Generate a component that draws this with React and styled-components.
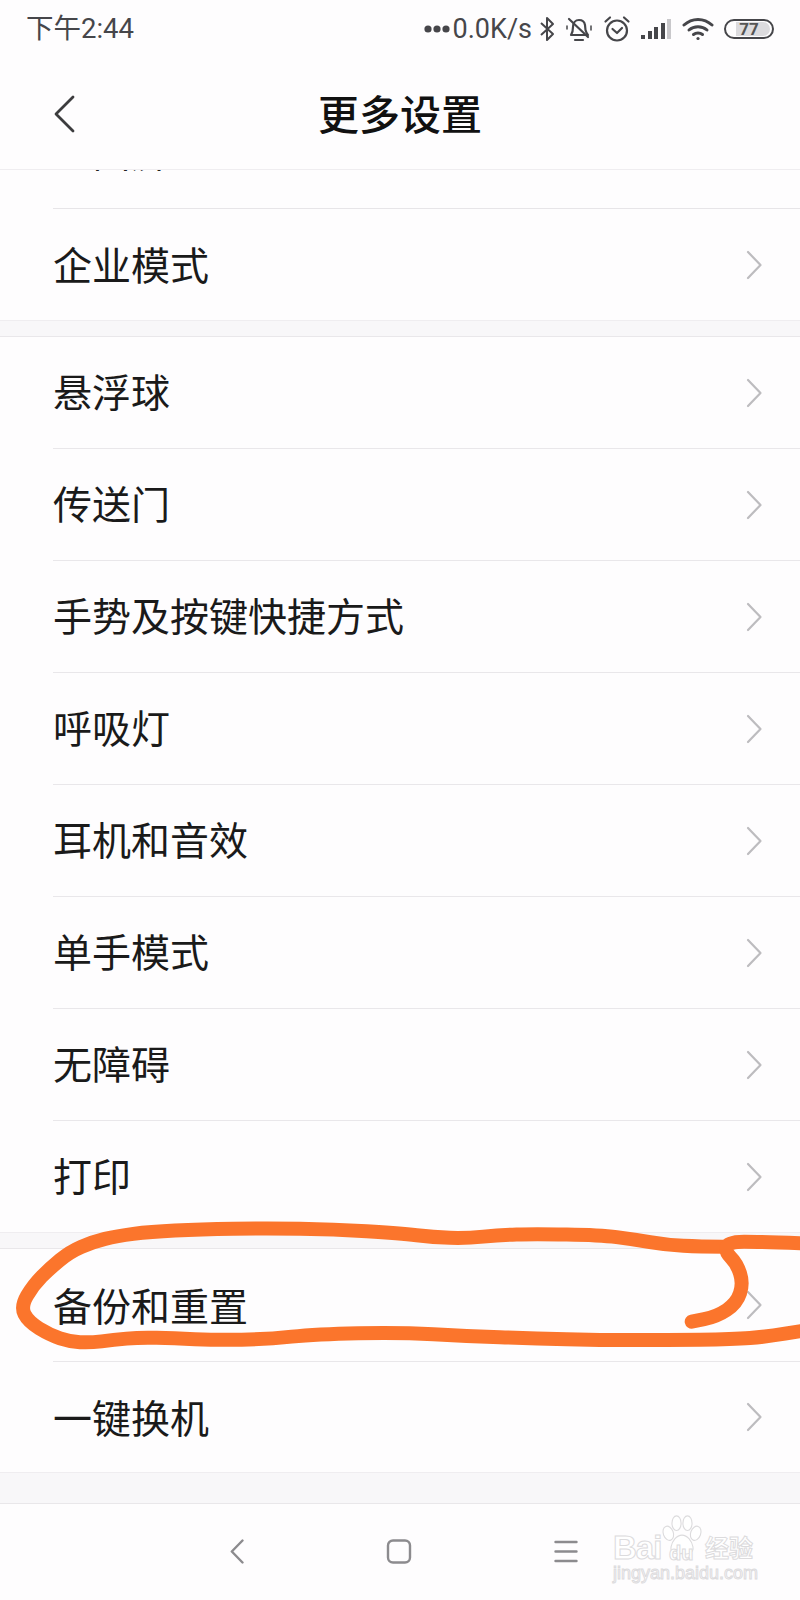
import React from 'react';
import styled, { createGlobalStyle } from 'styled-components';

const Global = createGlobalStyle`
  html, body { margin: 0; padding: 0; background: #fefdfe; }
  body { width: 800px; height: 1600px; overflow: hidden; font-family: "Noto Sans CJK SC", "Noto Sans", sans-serif; }
  #root { width: 800px; height: 1600px; }
`;

const Page = styled.div`
  position: relative;
  width: 800px;
  height: 1600px;
  display: flex;
  flex-direction: column;
  background: #fefdfe;
  overflow: hidden;
`;

const StatusBar = styled.div`
  height: 60px;
  display: flex;
  align-items: center;
  justify-content: space-between;
  padding: 0 26px 2px 26px;
  box-sizing: border-box;
  color: #46464a;
`;

const Time = styled.span`
  font-size: 27.5px;
  line-height: 30px;
  font-family: "Roboto", "Noto Sans CJK SC", sans-serif;
`;

const StatusIcons = styled.div`
  display: flex;
  align-items: center;
  height: 36px;
  gap: 10px;
`;

const SpeedGroup = styled.div`
  display: flex;
  align-items: center;
  gap: 3px;
  margin-right: -3px;
`;

const Speed = styled.span`
  font-family: "Roboto", sans-serif;
  font-size: 27px;
  line-height: 30px;
`;

const TitleBar = styled.div`
  height: 109px;
  flex: none;
  position: relative;
  display: flex;
  align-items: center;
  justify-content: center;
`;

const Title = styled.h1`
  margin: 0 0 6px;
  font-size: 41px;
  line-height: 56px;
  font-weight: 500;
  color: #111;
`;

const BackButton = styled.svg`
  position: absolute;
  left: 52px;
  top: 35px;
`;

const List = styled.div`
  flex: none;
  display: flex;
  flex-direction: column;
  border-top: 1px solid #efedf0;
`;

const ClippedRow = styled.div`
  height: 39px;
  box-sizing: border-box;
  margin-left: 53px;
  overflow: hidden;
  border-bottom: 1px solid #e7e5e8;
  flex: none;
`;

const ClippedLabel = styled.div`
  font-size: 39px;
  line-height: 56px;
  color: #222;
  margin-top: -48px;
`;

const Row = styled.div`
  height: ${p => p.$h || 112}px;
  flex: none;
  box-sizing: border-box;
  margin-left: 53px;
  padding-right: 37px;
  display: flex;
  align-items: center;
  justify-content: space-between;
  border-bottom: ${p => (p.$last ? 'none' : '1px solid #e9e7ea')};
`;

const Label = styled.span`
  font-size: 39px;
  line-height: 56px;
  color: #1a1a1a;
  padding-bottom: ${p => p.$lift ?? 5}px;
`;

const Gap = styled.div`
  height: ${p => p.$h}px;
  flex: none;
  box-sizing: border-box;
  background: #f8f7f9;
  border-top: 1px solid #efedf0;
  border-bottom: 1px solid #e9e7ea;
`;

const NavBar = styled.div`
  flex: 1;
  display: flex;
  align-items: center;
  justify-content: center;
  gap: 142px;
  padding: 0 0 2px 8px;
  box-sizing: border-box;
`;

const Scribble = styled.svg`
  position: absolute;
  left: 0;
  top: 1200px;
  pointer-events: none;
`;

const Watermark = styled.div`
  position: absolute;
  left: 613px;
  top: 1515px;
  width: 150px;
  height: 72px;
  color: #fff;
  -webkit-text-stroke: 1px #dcdbdd;
  font-family: "Liberation Sans", "Noto Sans CJK SC", sans-serif;
`;

const MarkBrand = styled.span`
  position: absolute;
  left: 0;
  top: 14px;
  font-size: 33px;
  line-height: 38px;
  font-weight: 700;
  letter-spacing: -1px;
`;

const MarkDu = styled.span`
  position: absolute;
  left: 56px;
  top: 28px;
  font-size: 20px;
  line-height: 20px;
  font-weight: 700;
`;

const MarkCn = styled.span`
  position: absolute;
  left: 92px;
  top: 16px;
  font-size: 24px;
  line-height: 32px;
  font-weight: 700;
  font-family: "Noto Sans CJK SC", sans-serif;
`;

const MarkUrl = styled.span`
  position: absolute;
  left: 0;
  top: 47px;
  font-size: 18px;
  line-height: 22px;
  white-space: nowrap;
`;

const MarkPaw = styled.svg`
  position: absolute;
  left: 47px;
  top: 0;
`;

const Chevron = () => (
  <svg width="18" height="30" viewBox="0 0 18 30" fill="none">
    <path d="M3 2 L15.500 15 L3 28" stroke="#bdbcbf" strokeWidth="2.200" strokeLinecap="round" strokeLinejoin="round" />
  </svg>
);

const Dots = () => (
  <svg width="26" height="10" viewBox="0 0 26 10" fill="#46464a">
    <circle cx="4" cy="5" r="3.600" /><circle cx="13" cy="5" r="3.600" /><circle cx="22" cy="5" r="3.600" />
  </svg>
);

const Bluetooth = () => (
  <svg width="16" height="26" viewBox="0 0 16 26" fill="none" stroke="#46464a" strokeWidth="2">
    <path d="M2 7 L14 18 L8 24 L8 2 L14 8 L2 19" strokeLinejoin="round" />
  </svg>
);

const BellMuted = () => (
  <svg width="28" height="26" viewBox="0 0 28 26" fill="none" stroke="#46464a" strokeWidth="2.200" strokeLinecap="round">
    <path d="M6 19 C8 16 8 14 8 11 C8 7 10.500 4 14 4 C17 4 19.500 6 20 9 L20.500 14 C21 16 22 18 23 19 Z" strokeLinejoin="round" />
    <path d="M10 24 H18" />
    <path d="M4 3 L23 21" />
    <path d="M2 10 V13 M26 10 V14" strokeWidth="1.500" />
  </svg>
);

const Alarm = () => (
  <svg width="28" height="28" viewBox="0 0 28 28" fill="none" stroke="#46464a" strokeWidth="2.200" strokeLinecap="round" strokeLinejoin="round">
    <circle cx="14" cy="15.500" r="10" />
    <path d="M9.500 14 L14 18 L19 13" />
    <path d="M2.500 6.500 L7 2.500 M21 2.500 L25.500 6.500" />
  </svg>
);

const Signal = () => (
  <svg width="31" height="24" viewBox="0 0 31 24">
    <rect x="0" y="18" width="4" height="4" fill="#46464a" />
    <rect x="7" y="14" width="4" height="8" fill="#46464a" />
    <rect x="13" y="10" width="4" height="12" fill="#46464a" />
    <rect x="20" y="6" width="4" height="16" fill="#46464a" />
    <rect x="26" y="2" width="4" height="20" fill="#c9c8cb" />
  </svg>
);

const Wifi = () => (
  <svg width="32" height="24" viewBox="0 0 32 24" fill="none" stroke="#46464a" strokeWidth="3" strokeLinecap="round">
    <path d="M2 8 C10 0.500 22 0.500 30 8" />
    <path d="M7 13 C12 8.500 20 8.500 25 13" />
    <path d="M11.500 17.500 C14 15.500 18 15.500 20.500 17.500" />
    <circle cx="16" cy="21.500" r="1.600" fill="#46464a" stroke="none" />
  </svg>
);

const BatteryShell = styled.div`
  position: relative;
  width: 50px;
  height: 20px;
  box-sizing: border-box;
  border: 2px solid #46464a;
  border-radius: 10px;
  overflow: hidden;
  display: flex;
  align-items: center;
  justify-content: center;
`;

const BatteryFill = styled.div`
  position: absolute;
  left: 10px;
  top: 1px;
  bottom: 1px;
  right: 2px;
  background: #dcdbde;
  border-radius: 0 7px 7px 0;
`;

const BatteryText = styled.span`
  position: relative;
  font-family: "Roboto", sans-serif;
  font-size: 17px;
  line-height: 16px;
  font-weight: 700;
  color: #555;
`;

const Back = () => (
  <svg width="14" height="25" viewBox="0 0 14 25" fill="none">
    <path d="M12.500 1.500 L1.800 12.500 L12.500 23.500" stroke="#8c8b8e" strokeWidth="2.400" strokeLinecap="round" strokeLinejoin="round" />
  </svg>
);

const Home = () => (
  <svg width="26" height="25" viewBox="0 0 26 25" fill="none">
    <rect x="2" y="1.500" width="22" height="22" rx="5" stroke="#8c8b8e" strokeWidth="2.400" />
  </svg>
);

const Menu = () => (
  <svg width="24" height="23" viewBox="0 0 24 23" fill="none" stroke="#8c8b8e" strokeWidth="2.400" strokeLinecap="round">
    <path d="M1.500 2 H22.500 M1.500 11.500 H22.500 M1.500 21 H22.500" />
  </svg>
);

const L = (x, y) => [+(x / 3).toFixed(1), +(y / 3).toFixed(1)];
const R = (x, y) => [+(400 + x / 3).toFixed(1), +(y / 3).toFixed(1)];

const smooth = pts => {
  let d = `M${pts[0][0]} ${pts[0][1]}`;
  for (let i = 1; i < pts.length - 1; i++) {
    const mx = (pts[i][0] + pts[i + 1][0]) / 2;
    const my = (pts[i][1] + pts[i + 1][1]) / 2;
    d += ` Q${pts[i][0]} ${pts[i][1]} ${mx} ${my}`;
  }
  const l = pts[pts.length - 1];
  return d + ` L${l[0]} ${l[1]}`;
};

const loop = smooth([
  R(970, 140), R(900, 140), R(800, 135), R(700, 118), R(600, 105), R(400, 102), R(300, 105), R(200, 115), R(100, 112), R(0, 100),
  L(1000, 88), L(800, 85), L(600, 88), L(450, 95), L(350, 108), L(280, 125), L(210, 155), L(150, 205), L(100, 255),
  L(62, 320), L(85, 365), L(150, 405), L(210, 425), L(270, 428), L(340, 420), L(420, 412), L(520, 415), L(650, 420),
  L(800, 418), L(950, 402), R(0, 397), R(200, 408), R(400, 415), R(600, 420), R(800, 420), R(1000, 418), R(1100, 410), R(1210, 392),
]);
const hook = smooth([
  R(1210, 130), R(1080, 125), R(985, 125), R(975, 155), R(1010, 190), R(1030, 250), R(1010, 310), R(950, 350), R(875, 365),
]);

const firstGroup = ['悬浮球', '传送门', '手势及按键快捷方式', '呼吸灯', '耳机和音效', '单手模式', '无障碍', '打印'];

export default function App() {
  return (
    <Page>
      <Global />
      <StatusBar>
        <Time>下午2:44</Time>
        <StatusIcons>
          <SpeedGroup>
            <Dots />
            <Speed>0.0K/s</Speed>
          </SpeedGroup>
          <Bluetooth />
          <BellMuted />
          <Alarm />
          <Signal />
          <Wifi />
          <BatteryShell>
            <BatteryFill />
            <BatteryText>77</BatteryText>
          </BatteryShell>
        </StatusIcons>
      </StatusBar>
      <TitleBar>
        <BackButton width="24" height="38" viewBox="0 0 24 38" fill="none">
          <path d="M21 2 L4 19 L21 36" stroke="#3c3c3e" strokeWidth="2.800" strokeLinecap="round" strokeLinejoin="round" />
        </BackButton>
        <Title>更多设置</Title>
      </TitleBar>
      <List>
        <ClippedRow><ClippedLabel>全面屏</ClippedLabel></ClippedRow>
        <Row $h={111} $last><Label $lift={4}>企业模式</Label><Chevron /></Row>
        <Gap $h={17} />
        {firstGroup.map((t, i) => {
          const last = i === firstGroup.length - 1;
          return <Row key={t} $h={last ? 111 : 112} $last={last}><Label>{t}</Label><Chevron /></Row>;
        })}
        <Gap $h={17} />
        <Row $h={113}><Label $lift={3}>备份和重置</Label><Chevron /></Row>
        <Row $h={110} $last><Label $lift={3}>一键换机</Label><Chevron /></Row>
        <Gap $h={32} />
      </List>
      <NavBar>
        <Back />
        <Home />
        <Menu />
      </NavBar>
      <Scribble width="800" height="180" viewBox="0 0 800 180" fill="none" stroke="#fb752c" strokeWidth="14" strokeLinecap="round" strokeLinejoin="round">
        <path d={loop} />
        <path d={hook} />
      </Scribble>
      <Watermark>
        <MarkBrand>Bai</MarkBrand>
        <MarkPaw width="44" height="42" viewBox="0 0 46 46" fill="#fff" stroke="#dcdbdd" strokeWidth="1.200">
          <ellipse cx="8" cy="20" rx="5.500" ry="8" transform="rotate(-20 8 20)" />
          <ellipse cx="17" cy="9" rx="5" ry="8" />
          <ellipse cx="29" cy="9" rx="5" ry="8" />
          <ellipse cx="38" cy="20" rx="5.500" ry="8" transform="rotate(20 38 20)" />
          <path d="M23 22 C17 22 12 29 11 35 C10 41 15 44 23 42 C31 44 36 41 35 35 C34 29 29 22 23 22 Z" />
        </MarkPaw>
        <MarkDu>du</MarkDu>
        <MarkCn>经验</MarkCn>
        <MarkUrl>jingyan.baidu.com</MarkUrl>
      </Watermark>
    </Page>
  );
}
